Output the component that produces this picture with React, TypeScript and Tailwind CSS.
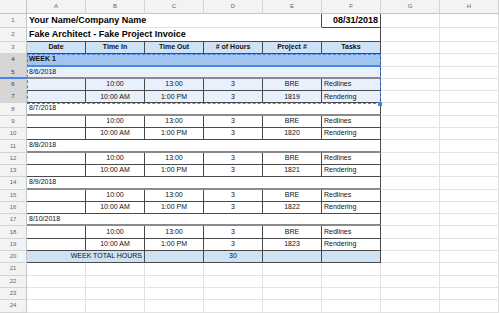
import type { ReactNode } from "react";

const cols = ["A", "B", "C", "D", "E", "F", "G", "H"];

type Day = { date: string; project: string };

const days: Day[] = [
  { date: "8/7/2018", project: "1820" },
  { date: "8/8/2018", project: "1821" },
  { date: "8/9/2018", project: "1822" },
  { date: "8/10/2018", project: "1823" },
];

function RowHead({ n, selected, tall }: { n: number; selected?: boolean; tall?: boolean }) {
  return (
    <div
      className={`${tall ? "h-[14px]" : "h-[12.3px]"} flex items-center justify-center border-r border-b border-r-[#c4c4c4] border-b-[#d4d4d4] text-[6px] ${
        selected ? "bg-[#d6d6d6] text-[#333]" : "bg-[#f3f3f3] text-[#666]"
      }`}
    >
      {n}
    </div>
  );
}

function Cell({ className = "", children }: { className?: string; children?: ReactNode }) {
  return (
    <div className={`flex items-center overflow-hidden whitespace-nowrap px-[2px] ${className}`}>
      {children}
    </div>
  );
}

function Blank() {
  return <div className="border-r border-b border-[#e2e2e2]" />;
}

function Row({ children, tall }: { children: ReactNode; tall?: boolean }) {
  return (
    <div
      className={`grid grid-cols-[27px_repeat(8,59px)] ${tall ? "h-[14px]" : "h-[12.3px]"}`}
    >
      {children}
    </div>
  );
}

const line = "border-r border-b border-[#4a4a4a]";

function DateRow({ n, date, bg = "bg-white", selected }: { n: number; date: string; bg?: string; selected?: boolean }) {
  return (
    <Row>
      <RowHead n={n} selected={selected} />
      <Cell className={`col-span-6 border-r border-b-2 border-r-[#4a4a4a] border-b-[#8a8a8a] ${bg}`}>{date}</Cell>
      <Blank />
      <Blank />
    </Row>
  );
}

function TimeRows({ n, project, bg = "bg-white", selected }: { n: number; project: string; bg?: string; selected?: boolean }) {
  const entries = [
    ["10:00", "13:00", "BRE", "Redlines"],
    ["10:00 AM", "1:00 PM", project, "Rendering"],
  ];
  return (
    <>
      {entries.map((e, i) => (
        <Row key={i}>
          <RowHead n={n + i} selected={selected} />
          <Cell className={`${line} ${bg}`} />
          <Cell className={`${line} ${bg} justify-center`}>{e[0]}</Cell>
          <Cell className={`${line} ${bg} justify-center`}>{e[1]}</Cell>
          <Cell className={`${line} ${bg} justify-center`}>3</Cell>
          <Cell className={`${line} ${bg} justify-center`}>{e[2]}</Cell>
          <Cell className={`${line} ${bg}`}>{e[3]}</Cell>
          <Blank />
          <Blank />
        </Row>
      ))}
    </>
  );
}

export default function App() {
  return (
    <div className="relative h-[313px] w-[500px] overflow-hidden bg-white font-['Liberation_Sans',Arial,sans-serif] text-[7px] text-[#111]">
      {/* column letters */}
      <div className="grid h-[14px] grid-cols-[27px_repeat(8,59px)]">
        <div className="border-r border-b border-[#c4c4c4] bg-[#f3f3f3]" />
        {cols.map((c) => (
          <div
            key={c}
            className="flex items-center justify-center border-r border-b border-r-[#d4d4d4] border-b-[#c4c4c4] bg-[#f3f3f3] text-[6px] text-[#666]"
          >
            {c}
          </div>
        ))}
      </div>

      <Row tall>
        <RowHead n={1} tall />
        <Cell className="col-span-5 border-r border-b border-r-[#4a4a4a] border-b-[#e2e2e2] text-[9px] font-bold text-black">
          Your Name/Company Name
        </Cell>
        <Cell className={`${line} justify-end text-[9px] font-bold text-black`}>08/31/2018</Cell>
        <Blank />
        <Blank />
      </Row>

      <Row tall>
        <RowHead n={2} tall />
        <Cell className={`col-span-6 ${line} text-[9px] font-bold text-black`}>
          Fake Architect - Fake Project Invoice
        </Cell>
        <Blank />
        <Blank />
      </Row>

      <Row>
        <RowHead n={3} />
        {["Date", "Time In", "Time Out", "# of Hours", "Project #", "Tasks"].map((h) => (
          <Cell key={h} className={`${line} justify-center bg-[#cfe2f3] font-bold`}>
            {h}
          </Cell>
        ))}
        <Blank />
        <Blank />
      </Row>

      <Row>
        <RowHead n={4} selected />
        <Cell className="col-span-6 border-r border-b-2 border-r-[#4a4a4a] border-b-[#4a86e8] bg-[#a2c4ee] font-bold">
          WEEK 1
        </Cell>
        <Blank />
        <Blank />
      </Row>

      <DateRow n={5} date="8/6/2018" bg="bg-[#e8f0fd]" selected />
      <TimeRows n={6} project="1819" bg="bg-[#e8f0fd]" selected />

      {days.map((d, i) => (
        <div key={d.date}>
          <DateRow n={8 + i * 3} date={d.date} />
          <TimeRows n={9 + i * 3} project={d.project} />
        </div>
      ))}

      <Row>
        <RowHead n={20} />
        <Cell className={`col-span-2 ${line} justify-end bg-[#cfe2f3]`}>WEEK TOTAL HOURS</Cell>
        <Cell className={`${line} bg-[#cfe2f3]`} />
        <Cell className={`${line} justify-center bg-[#cfe2f3]`}>30</Cell>
        <Cell className={`${line} bg-[#cfe2f3]`} />
        <Cell className={`${line} bg-[#cfe2f3]`} />
        <Blank />
        <Blank />
      </Row>

      {[21, 22, 23, 24].map((n) => (
        <Row key={n}>
          <RowHead n={n} />
          {cols.map((c) => (
            <Blank key={c} />
          ))}
        </Row>
      ))}

      {/* copy marquee around rows 4-7 */}
      <div className="pointer-events-none absolute left-[27px] top-[54px] h-[50px] w-[354px] border border-dashed border-[#4285f4]" />
      <div className="absolute left-[378px] top-[102px] h-[4px] w-[4px] bg-[#4285f4]" />
      <div className="absolute left-0 top-[77px] h-[2px] w-[27px] bg-[#4a86e8]" />
    </div>
  );
}
